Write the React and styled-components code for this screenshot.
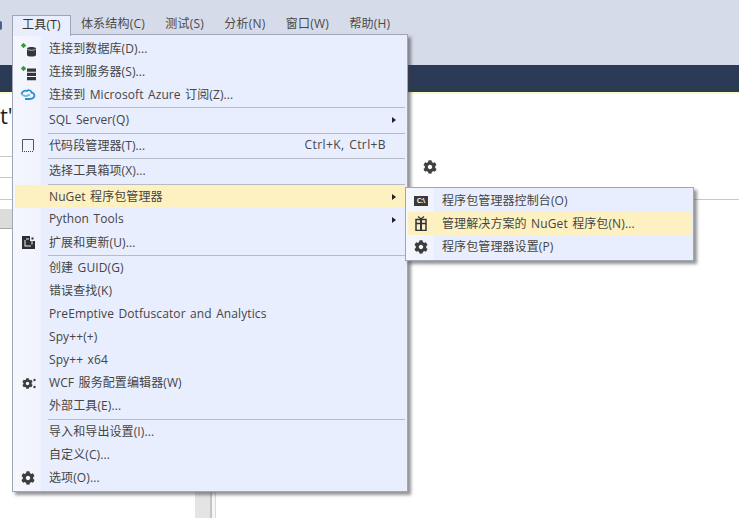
import React from "react";
import styled, { createGlobalStyle } from "styled-components";
import { FaCog } from "react-icons/fa";

const GlobalStyle = createGlobalStyle`
  html, body {
    margin: 0;
    padding: 0;
    height: 100%;
    background: #fff;
  }
  #root {
    height: 100%;
  }
`;

const fontStack = `"Open Sans", "Noto Sans CJK SC", sans-serif`;

const Page = styled.div`
  position: relative;
  width: 739px;
  height: 518px;
  overflow: hidden;
  display: flex;
  flex-direction: column;
  font-family: ${fontStack};
  font-size: 12px;
  color: #444;
`;

const TitleBand = styled.div`
  height: 65px;
  box-sizing: border-box;
  padding-top: 15px;
  background: #d6dbe9;
`;

const MenuBar = styled.div`
  display: flex;
  height: 20px;
  align-items: center;
`;

const CutOff = styled.span`
  width: 2px;
  height: 9px;
  margin-right: 10px;
  border-radius: 0 2px 2px 0;
  background: #46618f;
`;

const TopItem = styled.div`
  box-sizing: border-box;
  height: 20px;
  line-height: 18px;
  padding: 0 10.2px;
  letter-spacing: 0.2px;
  white-space: nowrap;
  color: #4a4a4a;
  ${(p) =>
    p.$open &&
    `
    position: relative;
    z-index: 3;
    padding: 0 9px;
    height: 21px;
    background: #e8eefd;
    border: 1px solid #a0a6b6;
    border-bottom: none;
    color: #333;
  `}
`;

const DarkBar = styled.div`
  height: 21px;
  background: #2a3a57;
`;

const DarkEdge = styled.div`
  height: 6px;
  background: #2b3b4f;
`;

const YellowLine = styled.div`
  height: 2px;
  background: #fdf8c8;
`;

const Content = styled.div`
  flex: 1;
  display: flex;
  background: #fff;
`;

const LeftPane = styled.div`
  width: 195px;
  display: flex;
  flex-direction: column;
`;

const Heading = styled.div`
  height: 63px;
  box-sizing: border-box;
  border-bottom: 1px solid #c8c8c8;
  font-size: 22px;
  line-height: 42px;
  color: #1e1e1e;
  white-space: nowrap;
  overflow: hidden;
`;

const FieldRow = styled.div`
  height: ${(p) => p.$h}px;
  box-sizing: border-box;
  border-bottom: 1px solid #c8c8c8;
`;

const GreyRow = styled.div`
  height: 20px;
  margin-top: 9px;
  box-sizing: border-box;
  background: #dcdcdc;
  border-bottom: 1px solid #a8a8a8;
`;

const Splitter = styled.div`
  width: 21px;
  background: linear-gradient(
    to right,
    #e4e4e4 0,
    #e4e4e4 15px,
    #c4c4c4 15px,
    #c4c4c4 17px,
    #f6f6f6 17px,
    #f6f6f6 20px,
    #dadada 20px
  );
`;

const RightPane = styled.div`
  flex: 1;
`;

const ToolRow = styled.div`
  height: 106px;
  box-sizing: border-box;
  padding: 65px 0 0 207px;
  border-bottom: 1px solid #c8c8c8;
  color: #404040;
  font-size: 14px;
`;

const Menu = styled.div`
  position: absolute;
  z-index: 2;
  left: ${(p) => p.$left}px;
  top: ${(p) => p.$top}px;
  width: ${(p) => p.$width}px;
  box-sizing: border-box;
  padding: ${(p) => p.$padTop}px 2px 2px;
  background: linear-gradient(
    to right,
    #f5f7fe 0,
    #f0f3fd 28px,
    #e8eefd 28px,
    #e8eefd 100%
  );
  border: 1px solid #a0a6b6;
  box-shadow: 3px 3px 3px rgba(60, 60, 70, 0.55);
`;

const Item = styled.div`
  display: flex;
  align-items: center;
  height: 23px;
  white-space: nowrap;
  color: #454545;
  letter-spacing: 0.1px;
  word-spacing: 1.2px;
  background: ${(p) => (p.$active ? "#fdf1c2" : "transparent")};
`;

const IconSlot = styled.span`
  flex: none;
  box-sizing: border-box;
  width: 34px;
  padding-right: 8px;
  display: flex;
  justify-content: center;
  align-items: center;
  color: #3c3c3c;
`;

const Label = styled.span`
  flex: 1;
  padding-bottom: 2px;
`;

const Shortcut = styled.span`
  margin-right: 19px;
  padding-bottom: 2px;
  letter-spacing: 0.4px;
`;

const Arrow = styled.span`
  width: 0;
  height: 0;
  margin-right: 9px;
  border-left: 4px solid #222;
  border-top: 3.5px solid transparent;
  border-bottom: 3.5px solid transparent;
`;

const Separator = styled.div`
  height: 1px;
  margin: 1px 0 0.5px 33px;
  background: #b5bbc9;
`;

const ConsoleBadge = styled.span`
  display: block;
  width: 14px;
  height: 10px;
  background: #3a3a3a;
  color: #f2f2f2;
  font-size: 7px;
  font-weight: 700;
  line-height: 10px;
  text-align: center;
  letter-spacing: -0.3px;
  word-spacing: 0;
`;

const ServiceWrap = styled.span`
  display: flex;
  align-items: center;
  margin-left: 1px;
`;

const Star = () => (
  <path
    d="M4.500 3v5M2 5.500h5M2.800 3.800l3.400 3.400M6.200 3.800L2.800 7.200"
    stroke="#3c9a3c"
    strokeWidth="1.100"
  />
);

const DatabaseIcon = () => (
  <svg width="18" height="18" viewBox="0 0 18 18">
    <Star />
    <path d="M8 8.500C8 6.500 17 6.500 17 8.500v6.500c0 2-9 2-9 0z" fill="#363636" />
    <path d="M8.500 9.500c2 1 6 1 8 0" stroke="#cfd6e6" strokeWidth="0.800" fill="none" />
  </svg>
);

const ServerIcon = () => (
  <svg width="18" height="18" viewBox="0 0 18 18">
    <Star />
    <path d="M8 5.500h9v3.200H8zM8 9.800h9V13H8zM8 14h9v3.200H8z" fill="#363636" />
  </svg>
);

const AzureIcon = () => (
  <svg width="16" height="11" viewBox="0 0 16 11">
    <path
      d="M1.500 5C2 2.500 4.500 1 7 2c1.500-1.500 4-1 4.500 1.500C14 3.800 15 6 14 8c-.8 1.500-2.500 2-4.500 2H5"
      fill="none"
      stroke="#2a8fd0"
      strokeWidth="1.800"
    />
    <path d="M1.500 5C3.500 7.500 7 7.500 10 5.500" fill="none" stroke="#5db8e8" strokeWidth="1.600" />
  </svg>
);

const SnippetIcon = () => (
  <svg width="12" height="13" viewBox="0 0 12 13">
    <path d="M0.500 11.500V0.500h11v11" fill="none" stroke="#555" strokeWidth="1" />
    <path d="M0 12.500h12" stroke="#444" strokeWidth="1" strokeDasharray="1 1" />
  </svg>
);

const ExtensionsIcon = () => (
  <svg width="13" height="13" viewBox="0 0 13 13">
    <path d="M0 0h13v13H0z" fill="#2e2e2e" />
    <path d="M2.500 4h1v5.500H9v1H2.500zM4 2.500h3v1H4z" fill="#eef1fb" />
    <path d="M9.500 5h1v3.500h-1zM8 0h5v5H8z" fill="#eef1fb" />
    <path d="M9.500 1.500h2v2h-2z" fill="#2e2e2e" />
  </svg>
);

const ServiceIcon = () => (
  <ServiceWrap>
    <FaCog size={11} />
    <svg width="3" height="11" viewBox="0 0 3 11">
      <circle cx="1.500" cy="2" r="1.200" fill="#3c3c3c" />
      <circle cx="1.500" cy="9" r="1.200" fill="#3c3c3c" />
    </svg>
  </ServiceWrap>
);

const PackageIcon = () => (
  <svg width="12" height="15" viewBox="0 0 12 15">
    <path d="M3 0.500l3 2.500 3-2.500" fill="none" stroke="#333" strokeWidth="1.200" />
    <path d="M1 3.500h10v4H1zM1 7.500h10v7H1z" fill="none" stroke="#333" strokeWidth="1.500" />
    <path d="M6 3v11.500" stroke="#333" strokeWidth="2" />
  </svg>
);

const topItems = ["工具(T)", "体系结构(C)", "测试(S)", "分析(N)", "窗口(W)", "帮助(H)"];

const toolsMenu = [
  { label: "连接到数据库(D)...", icon: <DatabaseIcon /> },
  { label: "连接到服务器(S)...", icon: <ServerIcon /> },
  { label: "连接到 Microsoft Azure 订阅(Z)...", icon: <AzureIcon /> },
  "sep",
  { label: "SQL Server(Q)", arrow: true },
  "sep",
  { label: "代码段管理器(T)...", icon: <SnippetIcon />, shortcut: "Ctrl+K, Ctrl+B" },
  "sep",
  { label: "选择工具箱项(X)..." },
  "sep",
  { label: "NuGet 程序包管理器", arrow: true, active: true },
  { label: "Python Tools", arrow: true },
  { label: "扩展和更新(U)...", icon: <ExtensionsIcon /> },
  "sep",
  { label: "创建 GUID(G)" },
  { label: "错误查找(K)" },
  { label: "PreEmptive Dotfuscator and Analytics" },
  { label: "Spy++(+)" },
  { label: "Spy++ x64" },
  { label: "WCF 服务配置编辑器(W)", icon: <ServiceIcon /> },
  { label: "外部工具(E)..." },
  "sep",
  { label: "导入和导出设置(I)..." },
  { label: "自定义(C)..." },
  { label: "选项(O)...", icon: <FaCog size={14} /> },
];

const nugetMenu = [
  { label: "程序包管理器控制台(O)", icon: <ConsoleBadge>C:\</ConsoleBadge> },
  { label: "管理解决方案的 NuGet 程序包(N)...", icon: <PackageIcon />, active: true },
  { label: "程序包管理器设置(P)", icon: <FaCog size={14} /> },
];

function MenuList({ items }) {
  return items.map((item, i) =>
    item === "sep" ? (
      <Separator key={i} />
    ) : (
      <Item key={item.label} $active={item.active}>
        <IconSlot>{item.icon}</IconSlot>
        <Label>{item.label}</Label>
        {item.shortcut && <Shortcut>{item.shortcut}</Shortcut>}
        {item.arrow && <Arrow />}
      </Item>
    )
  );
}

export default function App() {
  return (
    <Page>
      <GlobalStyle />
      <TitleBand>
        <MenuBar>
          <CutOff />
          {topItems.map((name, i) => (
            <TopItem key={name} $open={i === 0}>
              {name}
            </TopItem>
          ))}
        </MenuBar>
      </TitleBand>
      <DarkBar />
      <DarkEdge />
      <YellowLine />
      <Content>
        <LeftPane>
          <Heading>t'</Heading>
          <FieldRow $h={21} />
          <FieldRow $h={22} />
          <GreyRow />
        </LeftPane>
        <Splitter />
        <RightPane>
          <ToolRow>
            <FaCog />
          </ToolRow>
        </RightPane>
      </Content>
      <Menu $left={12} $top={34} $width={396} $padTop={2}>
        <MenuList items={toolsMenu} />
      </Menu>
      <Menu $left={405} $top={187} $width={289} $padTop={1}>
        <MenuList items={nugetMenu} />
      </Menu>
    </Page>
  );
}
